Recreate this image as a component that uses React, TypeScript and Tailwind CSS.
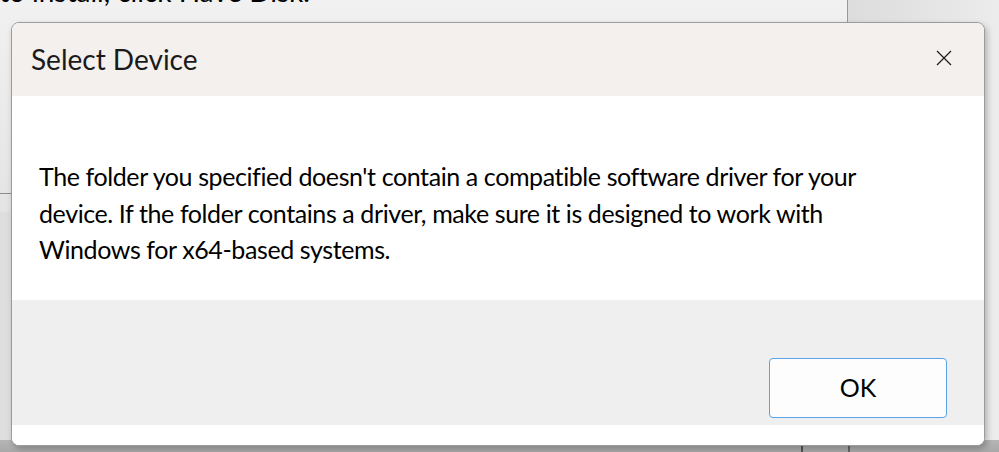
import React from "react";

const font = { fontFamily: 'Lato, "Open Sans", sans-serif' };

export default function App() {
  return (
    <div
      className="relative w-[999px] h-[452px] overflow-hidden bg-[#e9e9e9]"
      style={font}
    >
      {/* background window behind dialog */}
      <div className="absolute left-0 top-0 w-[847px] h-[212px] bg-gradient-to-b from-[#f1f1f1] to-[#e4e4e4]" />
      <div className="absolute left-[847px] top-0 w-[152px] h-[452px] bg-gradient-to-r from-[#dcdcdc] to-[#ececec]" />
      <div className="absolute left-[847px] top-0 w-px h-[30px] bg-[#9a9a9a]" />
      <div className="absolute left-0 top-[193px] w-[20px] h-px bg-[#8c8c8c]" />
      <div className="absolute left-0 top-[212px] w-[20px] h-[240px] bg-[#dedede]" />
      <div className="absolute left-0 top-[440px] w-[999px] h-[12px] bg-gradient-to-b from-[#b5b5b5] to-[#a9a9a9]" />
      <div className="absolute left-[801px] top-[440px] w-[2px] h-[12px] bg-[#555]" />
      <div className="absolute left-[848px] top-[440px] w-[2px] h-[12px] bg-[#666]" />
      <div className="absolute left-[-1px] top-[-24px] text-[28px] leading-[30px] text-black whitespace-nowrap">
        to install, click Have Disk.
      </div>

      {/* dialog */}
      <div className="relative ml-[11px] mt-[22px] w-[974px] h-[424px] rounded-lg border border-[#9c9c9c] bg-white overflow-hidden flex flex-col shadow-[2px_3px_6px_rgba(0,0,0,0.25)]">
        <div className="h-[73px] bg-[#f3f0ee] flex items-center justify-between pl-[19px] pr-[32px] shrink-0">
          <span className="text-[28px] leading-none text-[#1a1a1a] mt-[-2px]">
            Select Device
          </span>
          <svg width="16" height="16" viewBox="0 0 16 16" className="mt-[-4px]">
            <path d="M1 1L15 15M15 1L1 15" stroke="#1a1a1a" strokeWidth="1.2" fill="none" />
          </svg>
        </div>
        <div className="h-[204px] bg-white pl-[27px] pt-[62px] shrink-0">
          <p className="text-[25px] leading-[36.5px] text-black whitespace-nowrap tracking-[-0.4px]">
            The folder you specified doesn't contain a compatible software driver for your
            <br />
            device. If the folder contains a driver, make sure it is designed to work with
            <br />
            Windows for x64-based systems.
          </p>
        </div>
        <div className="h-[125px] bg-[#efefef] flex items-end justify-end pr-[37px] pb-[7px] shrink-0">
          <button className="w-[178px] h-[60px] rounded-[4px] border border-[#5aa3e6] bg-[#fdfdfd] text-[25px] text-black flex items-center justify-center">
            OK
          </button>
        </div>
        <div className="flex-1 bg-white" />
      </div>
    </div>
  );
}
